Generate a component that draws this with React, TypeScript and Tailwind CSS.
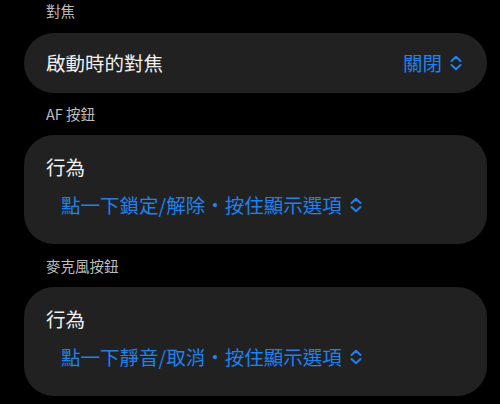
import React from "react";

const font = { fontFamily: '"Noto Sans CJK TC", "Noto Sans", sans-serif' };

function Chevrons() {
  return (
    <svg width="12" height="16" viewBox="0 0 12 16" fill="none" className="shrink-0">
      <path d="M1.5 6 L6 1.8 L10.5 6" stroke="#1f82ee" strokeWidth="2" strokeLinecap="round" strokeLinejoin="round" />
      <path d="M1.5 10 L6 14.2 L10.5 10" stroke="#1f82ee" strokeWidth="2" strokeLinecap="round" strokeLinejoin="round" />
    </svg>
  );
}

function Header({ text, h }: { text: string; h: string }) {
  return (
    <div className={`${h} flex items-center pl-[46px] text-[14.5px] leading-[20px] text-[#bdbdbd]`}>{text}</div>
  );
}

function ActionCard({ value }: { value: string }) {
  return (
    <div className="ml-[24px] w-[463px] h-[109px] rounded-[30px] bg-[#212121] pl-[22px] pt-[19px]">
      <div className="text-[19.5px] leading-[26px] text-[#f0f0f0]">行為</div>
      <div className="mt-[12px] flex items-center gap-[8px] pl-[15px] text-[19.5px] leading-[26px] text-[#1f82ee]">
        <span>{value}</span>
        <Chevrons />
      </div>
    </div>
  );
}

export default function App() {
  return (
    <div className="w-[500px] h-[404px] overflow-hidden bg-black" style={font}>
      <div className="h-[33px] flex items-start pt-[1px] pl-[46px] text-[14.5px] leading-[20px] text-[#bdbdbd]">對焦</div>
      <div className="ml-[24px] w-[463px] h-[60px] rounded-full bg-[#212121] pl-[22px] pr-[25px] flex items-center justify-between">
        <span className="text-[19.5px] leading-[26px] text-[#f0f0f0]">啟動時的對焦</span>
        <span className="flex items-center gap-[8px] text-[19.5px] leading-[26px] text-[#1f82ee]">
          關閉
          <Chevrons />
        </span>
      </div>
      <Header text="AF 按鈕" h="h-[42px]" />
      <ActionCard value="點一下鎖定/解除・按住顯示選項" />
      <Header text="麥克風按鈕" h="h-[43px]" />
      <ActionCard value="點一下靜音/取消・按住顯示選項" />
    </div>
  );
}
